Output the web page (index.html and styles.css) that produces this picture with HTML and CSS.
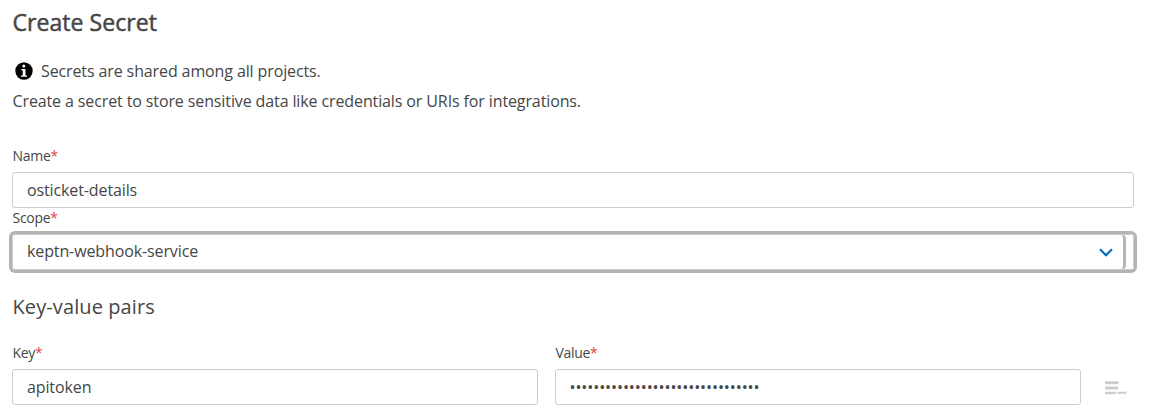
FILE: index.html
```html
<!DOCTYPE html>
<html lang="en">
<head>
<meta charset="utf-8">
<title>Create Secret</title>
<link rel="stylesheet" href="styles.css">
</head>
<body>
<main class="page">
  <h1 class="title">Create Secret</h1>
  <p class="info">
    <svg class="info-icon" viewBox="0 0 18 18"><circle cx="9" cy="9" r="8.7" fill="#000"/><circle cx="8.8" cy="4" r="1.5" fill="#fff"/><path d="M6.3 7h4.2v6.5H12v1.3H6v-1.3h1.7V8.3H6.3z" fill="#fff"/></svg>
    <span>Secrets are shared among all projects.</span>
  </p>
  <p class="description">Create a secret to store sensitive data like credentials or URIs for integrations.</p>
  <div class="label label-name">Name<span class="required">*</span></div>
  <div class="field">osticket-details</div>
  <div class="label label-scope">Scope<span class="required">*</span></div>
  <div class="select">
    <div class="select-inner">
      <span>keptn-webhook-service</span>
      <svg class="chevron" viewBox="0 0 14 9"><path d="M1 1.2l6 6 6-6" fill="none" stroke="#006bb8" stroke-width="2.2"/></svg>
    </div>
  </div>
  <h2 class="subtitle">Key-value pairs</h2>
  <div class="pairs">
    <div class="column">
      <div class="label">Key<span class="required">*</span></div>
      <div class="field">apitoken</div>
    </div>
    <div class="column">
      <div class="label">Value<span class="required">*</span></div>
      <div class="field secret">••••••••••••••••••••••••••••••••</div>
    </div>
    <svg class="remove" viewBox="0 0 22 14"><path d="M0 .3h13.3v3H0zM0 5.5h13.3v3H0zM0 10.7h11v2.5H0zM12.3 10.7h9.2v2h-9.2z" fill="#ccc"/></svg>
  </div>
</main>
</body>
</html>
```
FILE: styles.css
```css
* { box-sizing: border-box; }
body { margin: 0; background: #fff; color: #454646; font: 16px/24px "Open Sans", sans-serif; letter-spacing: -.115px; overflow: hidden; }
.page { width: 1134px; padding: 6px 0 0 12px; }
.title { margin: 0; padding-left: .5px; font-size: 23px; line-height: 32px; font-weight: 400; letter-spacing: .05px; -webkit-text-stroke: .5px #454646; }
.info { display: flex; align-items: center; gap: 9.5px; margin: 21px 0 0 2.5px; }
.info-icon { width: 18px; height: 18px; margin-right: -1px; }
.description { margin: 6px 0 0; padding-left: .5px; }
.label { padding-left: .5px; font-size: 14px; line-height: 20px; letter-spacing: -.3px; }
.label-name { margin-top: 33px; }
.label-scope { margin-top: 0; }
.required { color: #e43f45; }
.field { height: 36px; padding: 0 14px; border: 1px solid #ccc; border-radius: 3px; line-height: 34px; }
.secret { padding-left: 13.5px; letter-spacing: -.08px; }
.label + .field { margin-top: 6px; }
.select { height: 36px; margin-top: 6px; border: 1px solid #ccc; border-radius: 3px; box-shadow: 0 0 0 3px #b4b4b4; }
.select-inner { display: flex; align-items: center; justify-content: space-between; width: 1114px; height: 36px; margin: -1px; padding: 0 10px 2px 15px; border-right: 3px solid #b4b4b4; border-top: 1px solid #ccc; border-bottom: 1px solid #ccc; border-radius: 3px 5px 5px 3px; }
.chevron { width: 14px; height: 9px; position: relative; top: 1px; }
.subtitle { margin: 23px 0 0; padding-left: .5px; font-size: 20px; line-height: 28px; font-weight: 400; letter-spacing: .1px; }
.pairs { display: flex; margin-top: 22px; gap: 17px; }
.column { width: 526px; }
.remove { width: 22px; height: 14px; margin: 37.5px 0 0 7px; flex: none; }
```
